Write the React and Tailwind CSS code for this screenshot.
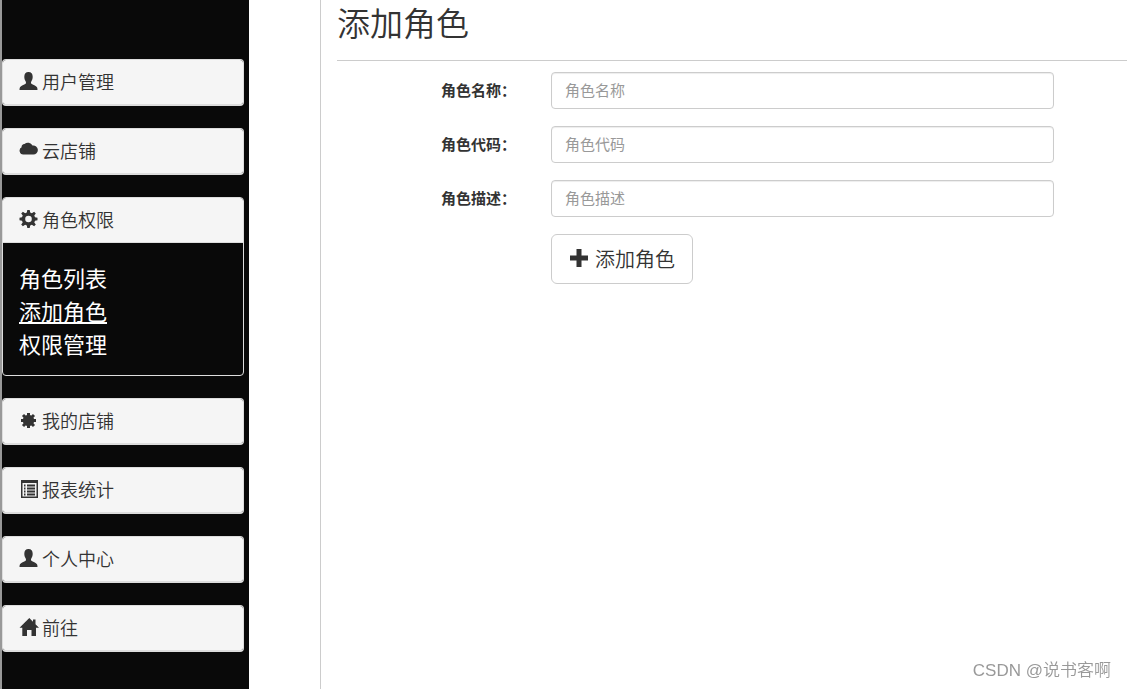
const icons = {
  user: (
    <path d="M9.500 1C6.700 1 5.300 3 5.300 5.800c0 1.700.5 3.300 1.300 4.500.5.8.6 1.900 0 2.400C5.300 13.800 1.800 14.700 1 16.200.6 17 .5 18 .5 19h18c0-1-.1-2-.5-2.800-.8-1.500-4.300-2.400-5.600-3.500-.6-.5-.5-1.600 0-2.400.8-1.200 1.300-2.800 1.300-4.500C13.700 3 12.300 1 9.500 1z" />
  ),
  cloud: (
    <path d="M4.200 14.500A3.900 3.900 0 0 1 2.600 7.200 2.800 2.800 0 0 1 5.500 4 5.200 5.200 0 0 1 13.500 5.600 4.500 4.500 0 1 1 14 14.500z" />
  ),
  cog: (
    <path
      fillRule="evenodd"
      d="M8.300 1h2.400l.5 2.500 1.700.7 2.200-1.500 1.700 1.700-1.500 2.200.7 1.700 2.500.5v2.400l-2.500.5-.7 1.700 1.500 2.200-1.700 1.700-2.200-1.500-1.700.7-.5 2.500H8.300l-.5-2.500-1.700-.7-2.200 1.500-1.700-1.700 1.500-2.200-.7-1.700-2.500-.5V8.800L3 8.300l.7-1.700-1.500-2.200 1.700-1.700 2.200 1.500 1.700-.7zM9.500 6.700a3.300 3.300 0 1 0 0 6.600 3.300 3.300 0 0 0 0-6.600z"
    />
  ),
  certificate: (
    <>
      <circle cx="9.500" cy="10.500" r="5.700" />
      <path
        d="M9.500 3v15M2 10.500h15M4 5l11 11M15 5 4 16"
        fill="none"
        stroke="#333"
        strokeWidth="3"
      />
    </>
  ),
  list: (
    <path
      fillRule="evenodd"
      d="M2 1h17v18H2zM3.500 4v13.500h14V4zM5 5.500h1.500v2H5zM8 5.500h8v2H8zM5 8.500h1.500v2H5zM8 8.500h8v2H8zM5 11.500h1.500v2H5zM8 11.500h8v2H8zM5 14.500h1.500v2H5zM8 14.500h8v2H8z"
    />
  ),
  home: <path d="M10.300 1 .5 10.800h2.800V19H8v-6h4.500v6H17v-8.200h3L16.500 7.300V2.500H14v2.300z" />,
  plus: <path d="M7.500 0h5v6.500H19v5h-6.500V18h-5v-6.500H1v-5h6.500z" />,
}

function Icon({ name }) {
  return (
    <svg viewBox="0 0 20 20" className="h-5 w-5 shrink-0 fill-[#333]" aria-hidden="true">
      {icons[name]}
    </svg>
  )
}

const menu = [
  { icon: 'user', label: '用户管理' },
  { icon: 'cloud', label: '云店铺' },
  {
    icon: 'cog',
    label: '角色权限',
    items: [
      { label: '角色列表' },
      { label: '添加角色', active: true },
      { label: '权限管理' },
    ],
  },
  { icon: 'certificate', label: '我的店铺' },
  { icon: 'list', label: '报表统计' },
  { icon: 'user', label: '个人中心' },
  { icon: 'home', label: '前往' },
]

const fields = [
  { id: 'name', label: '角色名称' },
  { id: 'code', label: '角色代码' },
  { id: 'description', label: '角色描述' },
]

function Panel({ icon, label, items }) {
  return (
    <section className={`overflow-hidden rounded border border-[#ddd] ${items ? '' : 'border-b-2'}`}>
      <h4 className="bg-[#f5f5f5]">
        <a href="#" className="flex h-11 items-center gap-[3px] pb-0.5 pl-4 text-lg font-[350] text-[#333]">
          <Icon name={icon} />
          {label}
        </a>
      </h4>
      {items && (
        <ul className="border-t border-[#ddd] px-4 pt-[18px] pb-[15px] text-[22px] leading-[33px] text-white">
          {items.map((item) => (
            <li key={item.label}>
              <a href="#" className={item.active ? 'underline underline-offset-2' : ''}>
                {item.label}
              </a>
            </li>
          ))}
        </ul>
      )}
    </section>
  )
}

export default function App() {
  return (
    <div className="flex min-h-screen bg-white font-['Noto_Sans_CJK_SC',sans-serif] text-[#333]">
      <aside className="w-[249px] shrink-0 border-l-2 border-[#999] bg-[#090909] pt-[59px] pr-[5px]">
        <nav className="flex flex-col gap-[22px]">
          {menu.map((entry) => (
            <Panel key={entry.label} {...entry} />
          ))}
        </nav>
      </aside>

      <main className="ml-[71px] flex-1 border-l border-[#ccc] pl-4">
        <h1 className="h-[61px] border-b border-[#ccc] text-[33px] leading-[45px] font-[350]">添加角色</h1>
        <form className="mt-[11px] flex flex-col gap-[17px]">
          {fields.map((field) => (
            <div key={field.id} className="grid grid-cols-[214fr_503fr_73fr] items-center">
              <label htmlFor={field.id} className="pr-[35px] pb-0.5 text-right text-[15px] leading-5 font-bold">
                {field.label}：
              </label>
              <input
                id={field.id}
                type="text"
                placeholder={field.label}
                className="h-[37px] w-full rounded border border-[#ccc] px-[13px] pb-0.5 text-[15px] shadow-[inset_0_1px_1px_rgba(0,0,0,0.075)] placeholder:text-[#999]"
              />
            </div>
          ))}
          <div className="grid grid-cols-[214fr_503fr_73fr]">
            <button
              type="button"
              className="col-start-2 flex h-[50px] items-center gap-[6px] justify-self-start rounded-md border border-[#ccc] px-[17px] text-xl font-[350]"
            >
              <Icon name="plus" />
              添加角色
            </button>
          </div>
        </form>
      </main>

      <p className="fixed right-4 bottom-1 font-['Liberation_Sans','Noto_Sans_CJK_SC',sans-serif] text-[17px] leading-7 font-[350] text-[#999]">
        CSDN @说书客啊
      </p>
    </div>
  )
}
